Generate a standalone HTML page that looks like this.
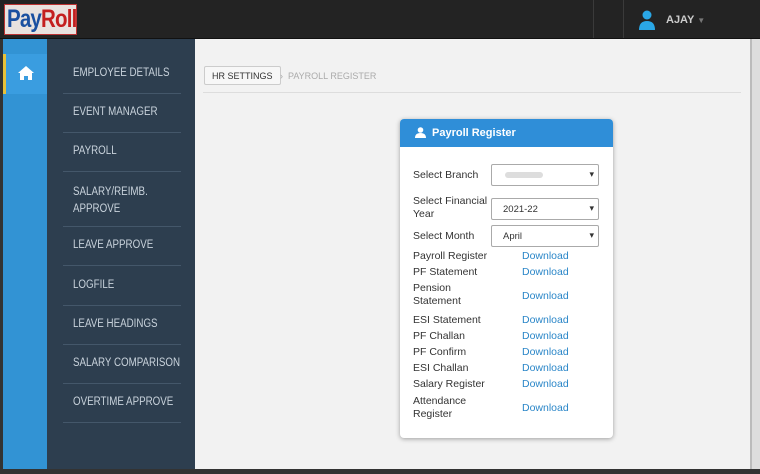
<!DOCTYPE html>
<html><head><style>
*{margin:0;padding:0;box-sizing:border-box}
body{width:760px;height:474px;overflow:hidden;background:#333;font-family:"Liberation Sans",sans-serif;position:relative}
.top{position:absolute;left:0;top:0;width:760px;height:39px;background:#232323;border-bottom:1px solid #111}
.logo{position:absolute;left:4px;top:4px;width:73px;height:31px;background:#e9e2df;border:1px solid #b33}
.logo span{position:absolute;left:2px;top:0;font:bold 25px "Liberation Sans";letter-spacing:-1px;transform:scaleX(.82);transform-origin:left;white-space:nowrap}
.blue{position:absolute;left:3px;top:39px;width:44px;height:430px;background:#3293d4}
.home{position:absolute;left:3px;top:54px;width:44px;height:40px;background:#3a9de0;border-left:3px solid #e8c23a}
.side{position:absolute;left:47px;top:39px;width:148px;height:430px;background:#2d3e4f}
.item{position:absolute;left:26px;font-size:11.5px;color:#c9d3dc;transform:scaleX(.85);transform-origin:left;white-space:nowrap}
.sep{position:absolute;left:16px;width:118px;height:1px;background:#44576a}
.content{position:absolute;left:195px;top:39px;width:555px;height:430px;background:#f2f2f2}
.scroll{position:absolute;left:750px;top:39px;width:10px;height:430px;background:#ddd;border-left:2px solid #bbb}
.bc{position:absolute;left:204px;top:66px;height:19px;border:1px solid #ccc;background:#f7f7f7;font-size:9px;color:#333;padding:4px 7px;border-radius:2px}
.card{position:absolute;left:400px;top:119px;width:213px;height:319px;background:#fff;border-radius:4px;box-shadow:0 1px 5px rgba(0,0,0,.35)}
.ch{height:28px;background:#2f8ed8;border-radius:4px 4px 0 0;color:#fff;font-weight:bold;font-size:11px;padding:8px 0 0 32px;position:relative}
.lab{position:absolute;left:13px;font-size:10.5px;color:#333;line-height:13px}
.dl{position:absolute;left:122px;font-size:10.5px;color:#2a86c8}
.sel{position:absolute;left:91px;width:108px;height:22px;border:1px solid #aaa;border-radius:2px;font-size:9.5px;color:#333;padding:5px 0 0 11px}
.sel:after{content:"▾";position:absolute;right:4px;top:4px;font-size:9px}
</style></head><body>
<div class="top">
<div class="logo"><span><span style="color:#1a4fa0;position:static">Pay</span><span style="color:#c41f1f;position:static">Roll</span></span></div>
<div style="position:absolute;left:593px;top:0;width:1px;height:38px;background:#3a3a3a"></div>
<div style="position:absolute;left:623px;top:0;width:1px;height:38px;background:#3a3a3a"></div>
<svg style="position:absolute;left:639px;top:10px" width="16" height="20" viewBox="0 0 16 20"><circle cx="8" cy="5" r="4.5" fill="#2aa7e6"/><path d="M0 20 Q0 11 8 11 Q16 11 16 20Z" fill="#2aa7e6"/></svg>
<div style="position:absolute;left:666px;top:14px;color:#ccc;font-weight:bold;font-size:11px">AJAY <span style="color:#777;font-size:8px">▼</span></div>
</div>
<div class="blue"></div>
<div class="home"><svg style="position:absolute;left:11px;top:11px" width="18" height="15" viewBox="0 0 18 15"><path d="M9 1L1 8h2v7h4v-4h4v4h4V8h2z" fill="#fff"/></svg></div>
<div class="side">
<div class="item" style="top:28px">EMPLOYEE DETAILS</div><div class="sep" style="top:54px"></div>
<div class="item" style="top:67px">EVENT MANAGER</div><div class="sep" style="top:93px"></div>
<div class="item" style="top:106px">PAYROLL</div><div class="sep" style="top:132px"></div>
<div class="item" style="top:145px;line-height:17px">SALARY/REIMB.<br>APPROVE</div><div class="sep" style="top:187px"></div>
<div class="item" style="top:200px">LEAVE APPROVE</div><div class="sep" style="top:226px"></div>
<div class="item" style="top:240px">LOGFILE</div><div class="sep" style="top:266px"></div>
<div class="item" style="top:279px">LEAVE HEADINGS</div><div class="sep" style="top:305px"></div>
<div class="item" style="top:318px">SALARY COMPARISON</div><div class="sep" style="top:344px"></div>
<div class="item" style="top:357px">OVERTIME APPROVE</div><div class="sep" style="top:383px"></div>
</div>
<div class="content"><div style="position:absolute;left:8px;top:53px;width:538px;height:1px;background:#ddd"></div></div>
<div class="scroll"></div>
<div class="bc">HR SETTINGS</div>
<div style="position:absolute;left:280px;top:71px;font-size:9px;color:#aaa">›&nbsp; PAYROLL REGISTER</div>
<div class="card">
<div class="ch"><svg style="position:absolute;left:15px;top:8px" width="11" height="11" viewBox="0 0 11 11"><circle cx="5.5" cy="3" r="2.8" fill="#fff"/><path d="M0 11Q0 6 5.5 6Q11 6 11 11Z" fill="#fff"/></svg>Payroll Register</div>
<div class="lab" style="top:50px">Select Branch</div>
<div class="sel" style="top:45px"><span style="display:inline-block;width:38px;height:6px;background:#ddd;border-radius:3px;margin-left:2px"></span></div>
<div class="lab" style="top:76px">Select Financial<br>Year</div>
<div class="sel" style="top:79px">2021-22</div>
<div class="lab" style="top:111px">Select Month</div>
<div class="sel" style="top:106px">April</div>
<div class="lab" style="top:131px">Payroll Register</div><div class="dl" style="top:131px">Download</div>
<div class="lab" style="top:147px">PF Statement</div><div class="dl" style="top:147px">Download</div>
<div class="lab" style="top:163px">Pension<br>Statement</div><div class="dl" style="top:171px">Download</div>
<div class="lab" style="top:195px">ESI Statement</div><div class="dl" style="top:195px">Download</div>
<div class="lab" style="top:211px">PF Challan</div><div class="dl" style="top:211px">Download</div>
<div class="lab" style="top:227px">PF Confirm</div><div class="dl" style="top:227px">Download</div>
<div class="lab" style="top:243px">ESI Challan</div><div class="dl" style="top:243px">Download</div>
<div class="lab" style="top:259px">Salary Register</div><div class="dl" style="top:259px">Download</div>
<div class="lab" style="top:276px">Attendance<br>Register</div><div class="dl" style="top:283px">Download</div>
</div>
</body></html>
